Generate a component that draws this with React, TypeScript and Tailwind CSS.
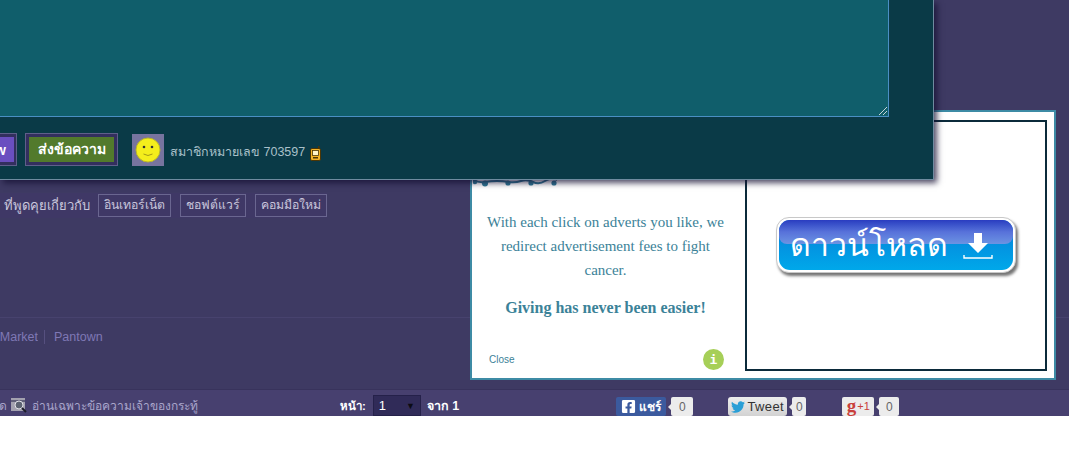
import { FaFacebookSquare, FaTwitter } from "react-icons/fa";

const tags = ["อินเทอร์เน็ต", "ชอฟต์แวร์", "คอมมือใหม่"];

function Smiley() {
  return (
    <div className="w-8 h-8 bg-[#77749f] flex items-center justify-center">
      <svg width="26" height="26" viewBox="0 0 26 26">
        <circle cx="13" cy="13" r="12" fill="#f4ee1c" stroke="#b9b52a" />
        <circle cx="9" cy="10" r="1.3" fill="#333" />
        <circle cx="17" cy="10" r="1.3" fill="#333" />
        <path d="M8.5 17q4.5 3 9 0" fill="none" stroke="#a39b18" strokeWidth="1" />
      </svg>
    </div>
  );
}

function Pager() {
  return (
    <svg width="11" height="15" viewBox="0 0 11 15" className="block">
      <rect x="0.5" y="2.5" width="10" height="12" rx="1.5" fill="#f5b428" stroke="#4c3606" />
      <rect x="8" y="0" width="1.5" height="3" fill="#4c3606" />
      <rect x="2.5" y="4.5" width="6" height="5" fill="#fff4c8" stroke="#4c3606" strokeWidth="0.8" />
      <rect x="3" y="11" width="5" height="1.5" fill="#4c3606" />
    </svg>
  );
}

function Dots() {
  return (
    <svg width="96" height="8" viewBox="0 0 96 8" className="block">
      <path d="M0 0q6 3 12 2t12-1 12 1 12-1 12 1 12-1 12-1" fill="none" stroke="#2f7a96" strokeWidth="2" />
      <circle cx="2" cy="2" r="2.2" fill="#2f7a96" />
      <circle cx="12" cy="3.5" r="3" fill="#2f7a96" />
      <circle cx="35" cy="3" r="2.6" fill="#2f7a96" />
      <circle cx="58" cy="3" r="2.6" fill="#2f7a96" />
      <circle cx="81" cy="3" r="2.6" fill="#2f7a96" />
    </svg>
  );
}

function DownloadButton() {
  return (
    <div className="relative w-[240px] h-[56px] rounded-[13px] bg-white shadow-[2px_3px_3px_rgba(0,0,0,0.55)] border border-[#c8c8c8] p-[2px]">
      <div className="relative w-full h-full rounded-[11px] overflow-hidden bg-gradient-to-b from-[#0a7cd6] to-[#00a8ea] flex items-center justify-between pl-[11px] pr-[20px]">
        <div className="absolute left-0 right-0 top-0 h-[24px] rounded-b-[8px] bg-gradient-to-b from-[#2a3cc0] via-[#5872da] to-[#6c93e2]" />
        <span className="relative text-white text-[32px] leading-none">ดาวน์โหลด</span>
        <svg width="30" height="28" viewBox="0 0 30 28" className="relative mt-[2px]">
          <path d="M11 1h8v10h6L15 21 5 11h6z" fill="#fff" />
          <path d="M1 23v3h28v-3" fill="none" stroke="#fff" strokeWidth="1.4" />
        </svg>
      </div>
    </div>
  );
}

function AdBox() {
  return (
    <div className="absolute left-[470px] top-[110px] w-[586px] h-[270px] bg-white border-2 border-[#3d8ba5] flex">
      <div className="w-[273px] flex flex-col pt-[68px] font-['Liberation_Serif',serif] text-[#3b8298]">
        <div className="pl-px">
          <Dots />
        </div>
        <p className="mt-[22px] pr-[6px] text-center text-[15px] leading-[24px]">
          With each click on adverts you like, we
          <br />
          redirect advertisement fees to fight
          <br />
          cancer.
        </p>
        <p className="mt-[16px] pr-[6px] text-center text-[16px] font-bold leading-5">
          Giving has never been easier!
        </p>
        <div className="mt-auto mb-2 pl-[17px] pr-[21px] flex items-center justify-between">
          <span className="text-[10px] font-['Liberation_Sans',sans-serif]">Close</span>
          <span className="w-[21px] h-[21px] rounded-full bg-[#a6cf58] text-white text-[13px] font-bold leading-none flex items-center justify-center font-['DejaVu_Sans_Mono',monospace]">
            i
          </span>
        </div>
      </div>
      <div className="mt-2 w-[302px] h-[251px] border-2 border-[#0b2a3a] flex items-center justify-center pb-[1px]">
        <DownloadButton />
      </div>
    </div>
  );
}

function ReplyPanel() {
  return (
    <div className="absolute left-0 top-0 w-[934px] h-[180px] bg-[#0a3a47] border-r border-b border-[#6f8ba0] shadow-[3px_3px_6px_rgba(20,15,50,0.75)] flex flex-col">
      <div className="relative w-[889px] h-[117px] bg-[#105e6b] border-r border-b border-[#4a8fc4]">
        <svg width="8" height="8" viewBox="0 0 8 8" className="absolute right-[1px] bottom-[1px]">
          <path d="M0 8L8 0M4 8l4-4" stroke="#c8d4d8" strokeWidth="1" />
        </svg>
      </div>
      <div className="flex items-center pt-[16px]">
        <div className="w-[17px] h-[33px] border-y border-r border-[#5f5f8a] bg-[#332f5e] flex items-center pr-[2px]">
          <div className="w-full h-[25px] bg-[#6a4fc0] text-white text-[14px] font-bold overflow-hidden flex justify-end items-center leading-none pr-[8px]">
            w
          </div>
        </div>
        <div className="ml-2 h-[33px] p-[3px] border border-[#5f5f8a] bg-[#332f5e]">
          <div className="h-full w-[85px] pb-[2px] bg-[#527a2c] text-white text-[14px] font-bold flex items-center justify-center leading-none">
            ส่งข้อความ
          </div>
        </div>
        <div className="ml-[14px]">
          <Smiley />
        </div>
        <span className="ml-[6px] mt-[6px] text-[12.5px] text-[#a9c0c9]">สมาชิกหมายเลข 703597</span>
        <span className="ml-[5px] mt-[8px]">
          <Pager />
        </span>
      </div>
    </div>
  );
}

function ShareButtons() {
  return (
    <>
      <div className="ml-[157px] flex">
        <div className="w-[50px] h-[19px] rounded-[2px] bg-[#3b5a9e] text-white text-[12px] font-bold flex items-center justify-center gap-[3px] leading-none">
          <FaFacebookSquare size={15} />
          แชร์
        </div>
        <Count w="w-[22px]" />
      </div>
      <div className="ml-[35px] flex">
        <div className="w-[59px] h-[19px] rounded-[3px] bg-gradient-to-b from-[#eeeeee] to-[#d2d2d2] text-[#333] text-[13px] tracking-[0.4px] flex items-center justify-center gap-[2px] leading-none">
          <FaTwitter size={14} className="text-[#2a9fd6]" />
          Tweet
        </div>
        <Count w="w-[14px]" />
      </div>
      <div className="ml-[36px] flex">
        <div className="w-[32px] h-[19px] rounded-[2px] bg-[#ececec] flex items-center justify-center gap-px leading-none font-['Liberation_Serif',serif]">
          <span className="text-[#c9403a] text-[19px] font-bold -mt-[3px]">g</span>
          <span className="text-[#c9403a] text-[11px] font-['Liberation_Sans',sans-serif]">+1</span>
        </div>
        <Count w="w-[20px]" />
      </div>
    </>
  );
}

function Count({ w }: { w: string }) {
  return (
    <div className={`relative ml-[5px] h-[19px] ${w} rounded-[2px] bg-[#ececec] text-[#666] text-[12px] flex items-center justify-center`}>
      <span className="absolute -left-[3px] top-[7px] border-y-[3px] border-r-[3px] border-y-transparent border-r-[#ececec]" />
      0
    </div>
  );
}

export default function App() {
  return (
    <div className="w-[1069px] h-[460px] bg-white overflow-hidden font-['Liberation_Sans','Noto_Sans',sans-serif]">
      <div className="relative h-[416px] bg-[#3e3a63] flex flex-col">
        <div className="mt-[193px] w-[327px] h-[25px] flex justify-end items-center overflow-hidden bg-[#3f3866] whitespace-nowrap">
          <span className="text-[13px] text-[#c9c6dc] shrink-0">ที่พูดคุยเกี่ยวกับ</span>
          {tags.map((tag, i) => (
            <span
              key={tag}
              className={`shrink-0 ${i === 0 ? "ml-2" : "ml-[9px]"} h-[23px] px-[5px] border border-[#6a6690] text-[12.25px] text-[#c9c6dc] flex items-center`}
            >
              {tag}
            </span>
          ))}
        </div>

        <div className="mt-[99px] border-t border-[#47426e] pt-[12px] flex text-[12.5px] text-[#7f78b5] leading-[14px]">
          <span className="w-[38px] overflow-hidden whitespace-nowrap flex justify-end">Market</span>
          <span className="ml-[6px] border-l border-[#56507f] pl-[9px]">Pantown</span>
        </div>

        <div className="mt-auto h-[27px] bg-[#47406f] border-t border-[#38335c] pt-[7px] flex items-start text-[12px] leading-[18px] text-[#a9a5cb] whitespace-nowrap">
          <span className="w-[7px] overflow-hidden flex justify-end">ด</span>
          <svg width="16" height="17" viewBox="0 0 16 17" className="ml-[4px]">
            <rect x="0" y="1" width="14" height="13" fill="#a3a1af" />
            <rect x="0" y="3" width="14" height="2" fill="#5f5e78" />
            <circle cx="8" cy="8" r="4" fill="#5d6372" stroke="#e2e2e8" />
            <path d="M11 11l4 4" stroke="#1c1c28" strokeWidth="2" />
          </svg>
          <span className="ml-[5px]">อ่านเฉพาะข้อความเจ้าของกระทู้</span>
          <span className="ml-[142px] text-white font-bold text-[11.5px]">หน้า:</span>
          <div className="ml-[7px] -mt-[2px] w-[48px] h-[21px] bg-[#302b58] border border-[#25214a] text-white text-[13px] flex items-center justify-between pl-[5px] pr-[5px]">
            <span>1</span>
            <span className="text-[9px] text-[#0c0c14]">▼</span>
          </div>
          <span className="ml-[6px] text-white text-[12.5px] font-bold">จาก 1</span>
          <ShareButtons />
        </div>

        <AdBox />
        <ReplyPanel />
      </div>
    </div>
  );
}
